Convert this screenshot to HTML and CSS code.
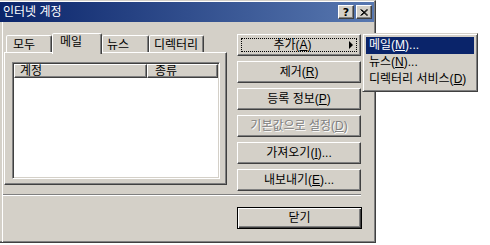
FILE: index.html
```html
<!DOCTYPE html>
<html lang="ko">
<head>
    <meta charset="UTF-8">
    <title>인터넷 계정</title>
    <link rel="stylesheet" href="styles.css">
</head>
<body>
<div class="window">
    <div class="titlebar">
        <span class="title">인터넷 계정</span>
        <div class="caption-btns">
            <span class="cap-btn help">?</span>
            <span class="cap-btn close">
                <svg width="8" height="7" viewBox="0 0 8 7"><path d="M0.5 0.5 L7 6.5 M1.5 0.5 L8 6.5 M7 0.5 L0.5 6.5 M8 0.5 L1.5 6.5" stroke="#000" stroke-width="1" fill="none"/></svg>
            </span>
        </div>
    </div>
    <div class="client">
        <div class="main-row">
            <div class="tabs-area">
                <div class="tabs">
                    <div class="tab tab-all">모두</div>
                    <div class="tab tab-mail active">메일</div>
                    <div class="tab tab-news">뉴스</div>
                    <div class="tab tab-dir">디렉터리</div>
                </div>
                <div class="tab-panel">
                    <div class="listview">
                        <div class="lv-header">
                            <div class="lv-col col-account">계정</div>
                            <div class="lv-col col-type">종류</div>
                        </div>
                    </div>
                </div>
            </div>
            <div class="buttons">
                <button class="btn btn-add"><span class="focus"><span class="label">추가(<u>A</u>)</span><span class="arrow"></span></span></button>
                <button class="btn">제거(<u>R</u>)</button>
                <button class="btn">등록 정보(<u>P</u>)</button>
                <button class="btn disabled">기본값으로 설정(<u>D</u>)</button>
                <button class="btn">가져오기(<u>I</u>)...</button>
                <button class="btn">내보내기(<u>E</u>)...</button>
            </div>
        </div>
        <div class="separator"></div>
        <div class="footer">
            <button class="btn btn-default">닫기</button>
        </div>
    </div>
</div>
<div class="menu">
    <div class="menu-item selected">메일(<u>M</u>)...</div>
    <div class="menu-item">뉴스(<u>N</u>)...</div>
    <div class="menu-item">디렉터리 서비스(<u>D</u>)</div>
</div>
</body>
</html>
```
FILE: styles.css
```css
*{
    box-sizing: border-box;
}
body{
    margin: 0;
    background: #fff;
    font: 12px/14px "Liberation Sans", "Noto Sans CJK KR", sans-serif;
    color: #000;
}
.window{
    width: 376px;
    height: 243px;
    background: #d4d0c8;
    border-top: 1px solid #d4d0c8;
    border-right: 1px solid #404040;
    border-bottom: 1px solid #404040;
    padding-top: 1px;
    box-shadow: inset -1px -1px #808080, inset 0 1px #fff;
}
.titlebar{
    height: 20px;
    margin-right: 1px;
    padding: 0 2px 0 3px;
    display: flex;
    align-items: center;
    justify-content: space-between;
    background: linear-gradient(to right, #0a246a, #5878b0);
    color: #fff;
}
.title{
    line-height: 14px;
}
.caption-btns{
    display: flex;
    gap: 2px;
}
.cap-btn{
    width: 16px;
    height: 14px;
    display: flex;
    align-items: center;
    justify-content: center;
    background: #d4d0c8;
    border: 1px solid;
    border-color: #fff #404040 #404040 #fff;
    box-shadow: inset -1px -1px #808080;
    color: #000;
    font: bold 11px/11px "DejaVu Sans", sans-serif;
}
.client{
    height: 220px;
    margin-left: 2px;
    border-left: 1px solid #fff;
    padding: 11px 0 0 1px;
}
.main-row{
    display: flex;
    align-items: flex-start;
}
.tabs-area{
    width: 223px;
}
.tabs{
    display: flex;
    align-items: flex-end;
    height: 19px;
    padding-left: 2px;
}
.tab{
    height: 17px;
    padding: 2px 0 0 5px;
    background: #d4d0c8;
    border: 1px solid;
    border-bottom: none;
    border-color: #fff #404040 transparent #fff;
    box-shadow: inset -1px 0 #808080;
    border-radius: 2px 2px 0 0;
    white-space: nowrap;
}
.tab.active{
    height: 21px;
    margin-bottom: -2px;
    padding: 1px 0 0 7px;
    position: relative;
    z-index: 1;
}
.tab-all{ width: 46px; padding-left: 6px; }
.tab-mail{ width: 50px; }
.tab-news{ width: 47px; padding-left: 4px; }
.tab-dir{ width: 55px; padding-left: 4px; }
.tab-panel{
    height: 133px;
    padding: 9px 0 0 7px;
    border: 1px solid;
    border-color: #fff #404040 #404040 #fff;
    box-shadow: inset -1px -1px #808080;
}
.listview{
    width: 208px;
    height: 117px;
    padding: 1px;
    background: #fff;
    border: 1px solid;
    border-color: #808080 #fff #fff #808080;
    box-shadow: inset 1px 1px #404040, inset -1px -1px #d4d0c8;
}
.lv-header{
    display: flex;
    height: 14px;
}
.lv-col{
    height: 14px;
    padding-left: 5px;
    line-height: 12px;
    background: #d4d0c8;
    border: 1px solid;
    border-color: #fff #404040 #404040 #fff;
    box-shadow: inset -1px -1px #808080;
}
.col-account{ width: 133px; }
.col-type{ width: 71px; padding-left: 7px; }
.buttons{
    display: flex;
    flex-direction: column;
    gap: 5px;
    margin: 1px 0 0 10px;
}
.btn{
    width: 124px;
    height: 22px;
    padding: 0;
    display: flex;
    align-items: center;
    justify-content: center;
    font: inherit;
    color: #000;
    background: #d4d0c8;
    border: 1px solid;
    border-color: #fff #404040 #404040 #fff;
    box-shadow: inset -1px -1px #808080;
}
.btn u{
    text-underline-offset: 1px;
}
.btn-add{
    padding: 3px;
}
.btn-add .focus{
    flex: 1;
    height: 100%;
    display: flex;
    align-items: center;
    border: 1px dotted #000;
}
.btn-add .label{
    flex: 1;
    text-align: center;
    padding-right: 6px;
}
.arrow{
    width: 0;
    height: 0;
    margin-right: 3px;
    border-top: 4px solid transparent;
    border-bottom: 4px solid transparent;
    border-left: 4px solid #000;
}
.btn.disabled{
    color: #808080;
    text-shadow: 1px 1px #fff;
}
.separator{
    width: 358px;
    height: 2px;
    margin: 3px 0 0 -1px;
    border-top: 1px solid #808080;
    border-bottom: 1px solid #fff;
}
.footer{
    display: flex;
    margin: 11px 0 0 233px;
}
.btn-default{
    width: 125px;
    border: 1px solid #000;
    box-shadow: inset 1px 1px #fff, inset -1px -1px #404040, inset -2px -2px #808080;
}
.menu{
    position: absolute;
    left: 362px;
    top: 33px;
    width: 116px;
    padding: 3px 3px;
    background: #d4d0c8;
    border: 1px solid;
    border-color: #d4d0c8 #404040 #404040 #d4d0c8;
    box-shadow: inset 1px 1px #fff, inset -1px -1px #808080;
}
.menu-item{
    height: 17px;
    line-height: 17px;
    padding-left: 3px;
    white-space: nowrap;
}
.menu-item.selected{
    background: #0a246a;
    color: #fff;
}
```
